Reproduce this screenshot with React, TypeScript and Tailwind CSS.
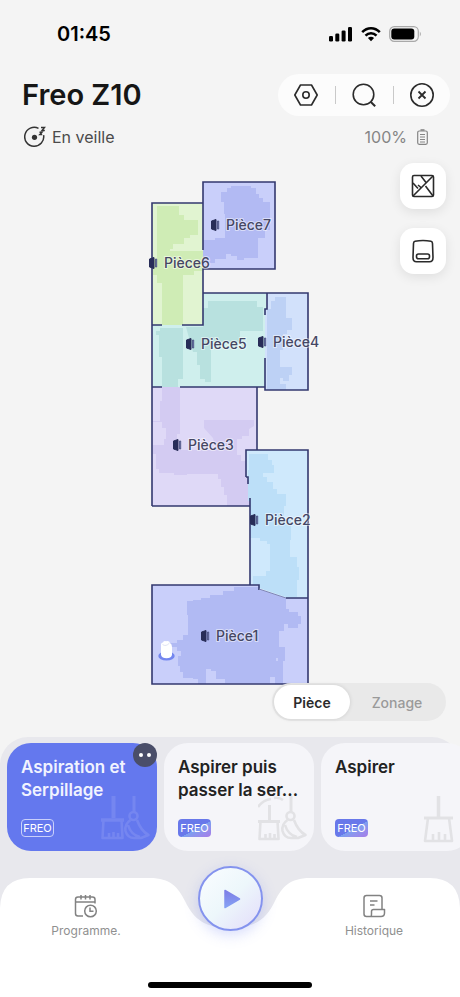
import type { ReactNode } from "react"
import { clsx } from "clsx"

type Room = {
  name: string
  fill: string
  cleanedFill: string
  outline: string
  cleaned: string[]
  label: [number, number]
}

const rooms: Room[] = [
  {
    name: "Pièce7",
    fill: "#c9cffa",
    cleanedFill: "#b2baf3",
    outline: "M63 12H135V99H63Z",
    cleaned: [
      "M81 22H87V18H91V16H111V18H116V24H119V28H123V32H130V60H125V68H118V88H104V90H97V86H91V84H86V89H75V93H63V70H75V68H85V44H84V32H81Z",
    ],
    label: [86, 60],
  },
  {
    name: "Pièce6",
    fill: "#e1f4d1",
    cleanedFill: "#cfecb5",
    outline: "M12 33H63V155H12Z",
    cleaned: ["M17 36H39V45H44V50H58V65H50V68H44V74H33V79H30V81H63V101H54V105H43V155H22V113H17V105H13V90H17Z"],
    label: [24, 98],
  },
  {
    name: "Pièce5",
    fill: "#cfefed",
    cleanedFill: "#b8e1df",
    outline: "M12 155H63V123H126V139H125V217H12Z",
    cleaned: [
      "M68 131H117V137H123V161H100V172H71V212H65V209H60V195H57V182H53L46 157H63V138H68Z",
      "M20 158H43V209H38V217H22V187H19V165H16V161H20Z",
    ],
    label: [61, 179],
  },
  {
    name: "Pièce4",
    fill: "#d2e1fb",
    cleanedFill: "#bdd1f5",
    outline: "M127 123H168V220H125V139H127Z",
    cleaned: ["M135 127H146V148H152V160H147V164H143V180H140V197H152V205H149V211H143V208H140V214H146V220H127V139H131V131H135Z"],
    label: [133, 177],
  },
  {
    name: "Pièce3",
    fill: "#dfd9f7",
    cleanedFill: "#d3cbf2",
    outline: "M12 217H117V280H106V307H108V315H110V336H12Z",
    cleaned: [
      "M22 217H40V264H37V280H76L73 268L64 258V250H114V256L109 259V266H102V269H97V285H101V291H106V307H108V315H110V336H87V325H84V317H81V309H78V304H47V305H34V303H19V299H16V284H13V275H24V269H26V258H22V252H12V251H20V231H22Z",
    ],
    label: [48, 280],
  },
  {
    name: "Pièce2",
    fill: "#cfe9fc",
    cleanedFill: "#bcdff8",
    outline: "M106 280H168V428H146L119 418V415H110V313L106 307Z",
    cleaned: [
      "M109 284H128V290H132V295H134V303H123V307H127V312H133V319H137V324H146V336H144V346H141V350H151V370H150V387H157V397H159V410H157V427H146L119 418V415H113V406H126V401H130V374H127V371H120V368H110V331H108V300H109Z",
    ],
    label: [125, 355],
  },
  {
    name: "Pièce1",
    fill: "#c9cffa",
    cleanedFill: "#b1baf3",
    outline: "M12 415H119V419L146 428H168V514H12Z",
    cleaned: [
      "M94 417H119V419L146 428V439H149V442H158V446H161V454H158V458H148V454H144V461H139V477H145V491H138V488H136V491H143V514H135V507H130V513H85V509H76V501H71V499H66V514H58V509H53V508H43V502H40V496H38V486H41V481H37V477H28V473H37V470H43V465H48V445H47V431H53V430H61V428H70V425H83V421H94Z",
    ],
    label: [76, 471],
  },
]

const walls =
  "M63 80V12H135V99H63V155H42M63 33H12V336M63 80V33M12 155H22M63 123H168V220H125V188M127 123V139H125V145M125 217H40M22 217H12M117 217V280M106 307V280H168V428M106 307H108V314M12 336H110V415M110 328V336M119 420V415H12V514H168V428H146"

function RoomMap() {
  return (
    <svg viewBox="0 0 180 520" className="h-[520px] w-[180px] overflow-visible" role="img" aria-label="Plan des pièces">
      {rooms.map((room) => (
        <g key={room.name}>
          <path d={room.outline} fill={room.fill} />
          {room.cleaned.map((d) => (
            <path key={d} d={d} fill={room.cleanedFill} />
          ))}
        </g>
      ))}
      <path d={walls} fill="none" stroke="#33386f" strokeWidth="1.6" />
      <path d="M119 419L146 428" stroke="#8087b5" strokeWidth="1" />

      {/* Docking station */}
      <ellipse cx="26.5" cy="486" rx="8.2" ry="4.6" fill="#7386ef" />
      <path d="M21 476Q20.500 472.500 23 472.500Q23.500 470.800 26 471.200Q29.500 470.500 30 473Q32 474 32 477V485Q31 488.200 26.500 488.200Q22 488.200 21 485Z" fill="#fff" />
      <path d="M22.500 474.500Q26 477 29.500 473" fill="none" stroke="#d7daf0" strokeWidth=".8" />

      {rooms.map(({ name, label: [x, y] }) => (
        <g key={name}>
          <path d={`M${x - 14.5} ${y - 9}l4.500-1.500v11l-4.500-1.500z`} fill="#282d58" stroke="#282d58" strokeWidth="1" strokeLinejoin="round" />
          <path d={`M${x - 8.5} ${y - 9}h1.200v8h-1.200z`} fill="#7d84b8" stroke="#444b7c" strokeWidth=".8" />
          <text
            x={x}
            y={y}
            fill="#454764"
            stroke="#fff"
            strokeOpacity=".5"
            strokeWidth="2"
            paintOrder="stroke"
            className="font-['Inter',sans-serif] text-[14px] font-medium"
          >
            {name}
          </text>
        </g>
      ))}
    </svg>
  )
}

function StatusBar() {
  return (
    <div className="flex h-[68px] items-center justify-between pl-[57px] pr-[38px] text-black">
      <span className="text-[20px] font-semibold leading-6">01:45</span>
      <div className="flex items-center gap-2">
        <svg viewBox="0 0 24 16" className="h-4 w-6" fill="currentColor">
          <rect x="0" y="10" width="4" height="5.500" rx="1.300" />
          <rect x="6.300" y="7.500" width="4" height="8" rx="1.300" />
          <rect x="12.600" y="4.500" width="4" height="11" rx="1.300" />
          <rect x="19" y="1" width="4" height="14.500" rx="1.300" />
        </svg>
        <svg viewBox="0 0 20 16" className="h-4 w-5" fill="none" stroke="currentColor" strokeWidth="2.500">
          <path d="M1.200 6.200C6.200.9 13.800.9 18.800 6.200" />
          <path d="M4.500 9.700C7.600 6.500 12.400 6.500 15.500 9.700" />
          <path d="M10 15.200L6.900 12Q10 9.500 13.100 12Z" fill="currentColor" stroke="none" />
        </svg>
        <svg viewBox="0 0 33 16" className="h-4 w-[33px]">
          <rect x=".7" y=".7" width="28.600" height="14.600" rx="4.600" fill="none" stroke="#a9a9a9" strokeWidth="1.200" />
          <rect x="2.300" y="2.500" width="23" height="11" rx="3" />
          <path d="M30.800 5.500Q33 8 30.800 10.500Z" fill="#a9a9a9" />
        </svg>
      </div>
    </div>
  )
}

function Header() {
  return (
    <header>
      <div className="mt-1.5 flex items-center justify-between pl-[22px] pr-2.5">
        <h1 className="text-[29px] font-semibold leading-[42px] text-[#161616]">Freo Z10</h1>
        <div className="flex h-[42px] w-[172px] items-center justify-between rounded-full bg-[#fcfcfc] px-4 text-[#2b2b2b]">
          <button type="button" aria-label="Réglages">
            <svg viewBox="0 0 24 24" className="size-6" fill="none" stroke="currentColor" strokeWidth="1.600" strokeLinejoin="round">
              <path d="M6.500 2H17.500L23.200 12L17.500 22H6.500L.8 12Z" />
              <circle cx="12" cy="12" r="3.200" />
            </svg>
          </button>
          <span className="h-[18px] w-px bg-[#c9c9c9]" />
          <button type="button" aria-label="Rechercher">
            <svg viewBox="0 0 24 24" className="size-6" fill="none" stroke="currentColor" strokeWidth="1.600">
              <circle cx="11.500" cy="11.500" r="10.300" />
              <path d="M18.600 18.800L23.200 23.300" strokeWidth="2" />
            </svg>
          </button>
          <span className="h-[18px] w-px bg-[#c9c9c9]" />
          <button type="button" aria-label="Fermer">
            <svg viewBox="0 0 24 24" className="size-6" fill="none" stroke="currentColor" strokeWidth="1.600">
              <circle cx="12" cy="12" r="11.200" />
              <path d="M8.500 8.500L15.500 15.500M15.500 8.500L8.500 15.500" strokeWidth="1.800" />
            </svg>
          </button>
        </div>
      </div>

      <div className="mt-[9px] flex h-6 items-center justify-between pl-6 pr-8 text-[16px] leading-6">
        <div className="flex items-center gap-1.5 text-[#4b4b4b]">
          <svg viewBox="0 0 22 22" className="size-[22px]" fill="none" stroke="#333" strokeWidth="1.500">
            <path d="M14.500 2.300A9.500 9.500 0 1 0 19.600 9.200" />
            <circle cx="10.500" cy="11.300" r="2.600" fill="#333" stroke="none" />
            <path d="M17 1.500H20.500L18 4.500H20.800M15.500 6.200H18L15.800 8.500H18.200" strokeWidth="1.400" />
          </svg>
          <span>En veille</span>
        </div>
        <div className="flex items-center gap-2.5 text-[#858585]">
          <span>100%</span>
          <svg viewBox="0 0 11 16" className="h-4 w-[11px]" fill="none" stroke="currentColor" strokeWidth="1.200">
            <rect x=".7" y="2" width="9.600" height="13.300" rx="1.500" />
            <path d="M3.500 1H7.500" strokeWidth="1.600" />
            <path d="M3 5.500H8M3 8H8M3 10.500H8M3 13H8" />
          </svg>
        </div>
      </div>
    </header>
  )
}

function MapButton({ label, children }: { label: string; children: ReactNode }) {
  return (
    <button
      type="button"
      aria-label={label}
      className="flex size-[46px] items-center justify-center rounded-[14px] bg-white text-[#2a2a2a] shadow-[0_3px_12px_rgba(0,0,0,0.09)]"
    >
      <svg viewBox="0 0 24 24" className="size-6" fill="none" stroke="currentColor" strokeWidth="1.600" strokeLinejoin="round">
        {children}
      </svg>
    </button>
  )
}

function MapArea() {
  return (
    <section className="relative flex h-[588px] justify-center pt-[21px]">
      <RoomMap />
      <div className="absolute right-3.5 top-3.5 flex flex-col gap-[19px]">
        <MapButton label="Carte">
          <rect x="1.500" y="1.500" width="21" height="21" rx="1.500" />
          <path d="M22 2L2 22M2 9L7 14.500M10 2L15 8.500M7 11L10 13.500M14.500 12L22 22" />
        </MapButton>
        <MapButton label="Station">
          <path d="M4 2.300Q12 .8 20 2.300Q21.500 2.600 21.500 4.500L22 18.500Q22 22.800 18.500 22.800H5.500Q2 22.800 2 18.500L2.500 4.500Q2.500 2.600 4 2.300Z" />
          <rect x="5.500" y="15" width="13" height="4.800" rx="2" />
        </MapButton>
      </div>
      <div className="absolute bottom-4 right-3.5 flex h-[38px] w-[174px] rounded-full bg-[#e9e9e9] p-0.5 text-[14px]">
        <button type="button" className="w-[76px] rounded-full bg-white font-semibold text-[#2b2b2b] shadow-[0_0_4px_rgba(0,0,0,0.12)]">
          Pièce
        </button>
        <button type="button" className="flex-1 font-medium text-[#9a9a9a]">
          Zonage
        </button>
      </div>
    </section>
  )
}

function Brush() {
  return (
    <>
      <path d="M12.500 1V23" strokeWidth="4" />
      <path d="M0 25H23" strokeWidth="3.500" />
      <path d="M2.500 25L1.500 43H21.500L20.500 25M8 43V38M12.500 43V37M17 43V38" strokeWidth="2.600" />
    </>
  )
}

function Mop() {
  return (
    <>
      <path d="M33 1V17" strokeWidth="3" />
      <circle cx="32.500" cy="21" r="4" strokeWidth="2.600" />
      <path d="M29.500 25Q23.500 29 24.500 36Q26.500 43 33 43H40L47.500 40Q40 36 36 25M27 30Q30 40 39 42" strokeWidth="2.600" />
    </>
  )
}

type Mode = {
  title: string
  active?: boolean
  art: "both" | "sequence" | "brush"
}

const modes: Mode[] = [
  { title: "Aspiration et\nSerpillage", active: true, art: "both" },
  { title: "Aspirer puis\npasser la ser...", art: "sequence" },
  { title: "Aspirer", art: "brush" },
]

function ModeCard({ title, active, art }: Mode) {
  return (
    <div className="relative w-[150px] shrink-0">
      <button
        type="button"
        className={clsx(
          "relative flex h-[108px] w-full flex-col items-start justify-between rounded-[24px] px-3.5 pb-3.5 pt-[13px] text-left",
          active ? "bg-[#6478ee] text-[#f1f3ff]" : "bg-[#f5f5f9] text-[#222]"
        )}
      >
        <svg
          viewBox="0 0 50 48"
          className={clsx("absolute bottom-2 right-1.5 h-12 w-[50px]", active ? "text-[#7586f0]" : "text-[#e2e2e5]")}
          fill="none"
          stroke="currentColor"
          strokeLinejoin="round"
        >
          {art === "both" && (
            <>
              <Brush />
              <Mop />
            </>
          )}
          {art === "sequence" && (
            <>
              <path d="M0 12Q5 5 13 4M16 3Q21 2 25 5" strokeWidth="2.600" />
              <path d="M11.500 10V25M0 26.500H22" strokeWidth="3" />
              <path d="M2.500 26L1.500 44H20.500L19.500 26M7.500 44V39M12 44V38M16.500 44V39" strokeWidth="2.600" />
              <Mop />
            </>
          )}
          {art === "brush" && (
            <g transform="translate(8 1)">
              <path d="M15.500 0V22" strokeWidth="3.500" />
              <path d="M1 22H30" strokeWidth="3" />
              <path d="M5 22L2 45H29L26 22M10 45V38M16 45V36M22 45V38" strokeWidth="2.600" />
            </g>
          )}
        </svg>
        <span className="relative whitespace-pre text-[17px] font-semibold leading-[23px]">{title}</span>
        <span
          className={clsx(
            "relative flex h-[18px] w-[33px] items-center justify-center rounded-[4px] text-[11px] leading-none text-white",
            active ? "border border-[#c9d0fb]" : "bg-linear-to-br from-[#6878ea] from-55% via-[#7aa0f0] to-[#a77be8]"
          )}
        >
          FREO
        </span>
      </button>
      {active && (
        <span className="absolute right-0 top-0 flex size-6 items-center justify-center gap-1 rounded-full bg-[#4a4e69]">
          <span className="size-1 rounded-full bg-white" />
          <span className="size-1 rounded-full bg-white" />
        </span>
      )}
    </div>
  )
}

function BottomNav() {
  return (
    <nav className="relative mt-[27px] flex-1">
      <svg viewBox="0 0 460 120" preserveAspectRatio="none" className="absolute inset-x-0 top-0 h-[120px] w-full" fill="#fff">
        <path d="M0 30Q1 0 30 0H150C170 0 178 9 185 23C194 42 206 50 230 50C254 50 266 42 275 23C282 9 290 0 310 0H430Q459 0 460 30V120H0Z" />
      </svg>
      <div className="relative grid grid-cols-[172px_1fr_172px] text-[12px] leading-[18px] text-[#909090]">
        <a href="#programme" className="flex flex-col items-center gap-1 pt-4">
          <svg viewBox="0 0 24 24" className="size-6" fill="none" stroke="#828282" strokeWidth="1.500">
            <path d="M9 22H4Q1.500 22 1.500 19.500V5.500Q1.500 3 4 3H18.500Q21 3 21 5.500V9.500M1.500 8H21M7 1V5.500M11.500 1V5.500M16 1V5.500" />
            <circle cx="16.500" cy="17" r="5.800" />
            <path d="M16 13.500V17.300H19.500" />
          </svg>
          Programme.
        </a>
        <div className="flex justify-center">
          <button
            type="button"
            aria-label="Démarrer"
            className="-mt-3 flex size-[65px] items-center justify-center rounded-full border-2 border-[#8493ee] bg-linear-to-br from-[#fafdff] via-[#edf7fb] to-[#e3dcfa] shadow-[0_4px_14px_rgba(110,130,240,0.28)]"
          >
            <svg viewBox="0 0 18 20" className="ml-1 h-5 w-[18px]">
              <defs>
                <linearGradient id="play" x1="0" y1="0" x2="0" y2="1">
                  <stop offset="0" stopColor="#7d7ee6" />
                  <stop offset="1" stopColor="#86a2f4" />
                </linearGradient>
              </defs>
              <path d="M2 1.500L16.500 10L2 18.500Z" fill="url(#play)" stroke="url(#play)" strokeWidth="1.500" strokeLinejoin="round" />
            </svg>
          </button>
        </div>
        <a href="#historique" className="flex flex-col items-center gap-1 pt-4">
          <svg viewBox="0 0 24 24" className="size-6" fill="none" stroke="#828282" strokeWidth="1.500" strokeLinejoin="round">
            <path d="M9 22.500H4.500Q2 22.500 2 20V4Q2 1.500 4.500 1.500H17.500Q20 1.500 20 4V15.500M9 22.500Q9.500 22 9.500 20V17.500Q9.500 15.500 11.500 15.500H22.500V19Q22.500 22.500 19 22.500H9" />
            <path d="M8 7H15.500M8 11H12.500" />
          </svg>
          Historique
        </a>
      </div>
      <div className="absolute bottom-[9px] left-1/2 h-1.5 w-[164px] -translate-x-1/2 rounded-full bg-black" />
    </nav>
  )
}

export default function App() {
  return (
    <main className="flex min-h-screen flex-col overflow-hidden bg-[#f4f4f4] font-['Inter',sans-serif]">
      <StatusBar />
      <Header />
      <MapArea />
      <div className="flex flex-1 flex-col rounded-t-[28px] bg-[#e8e8ed] pt-1.5">
        <div className="flex gap-[7px] overflow-hidden pl-[7px]">
          {modes.map((mode) => (
            <ModeCard key={mode.title} {...mode} />
          ))}
        </div>
        <BottomNav />
      </div>
    </main>
  )
}
